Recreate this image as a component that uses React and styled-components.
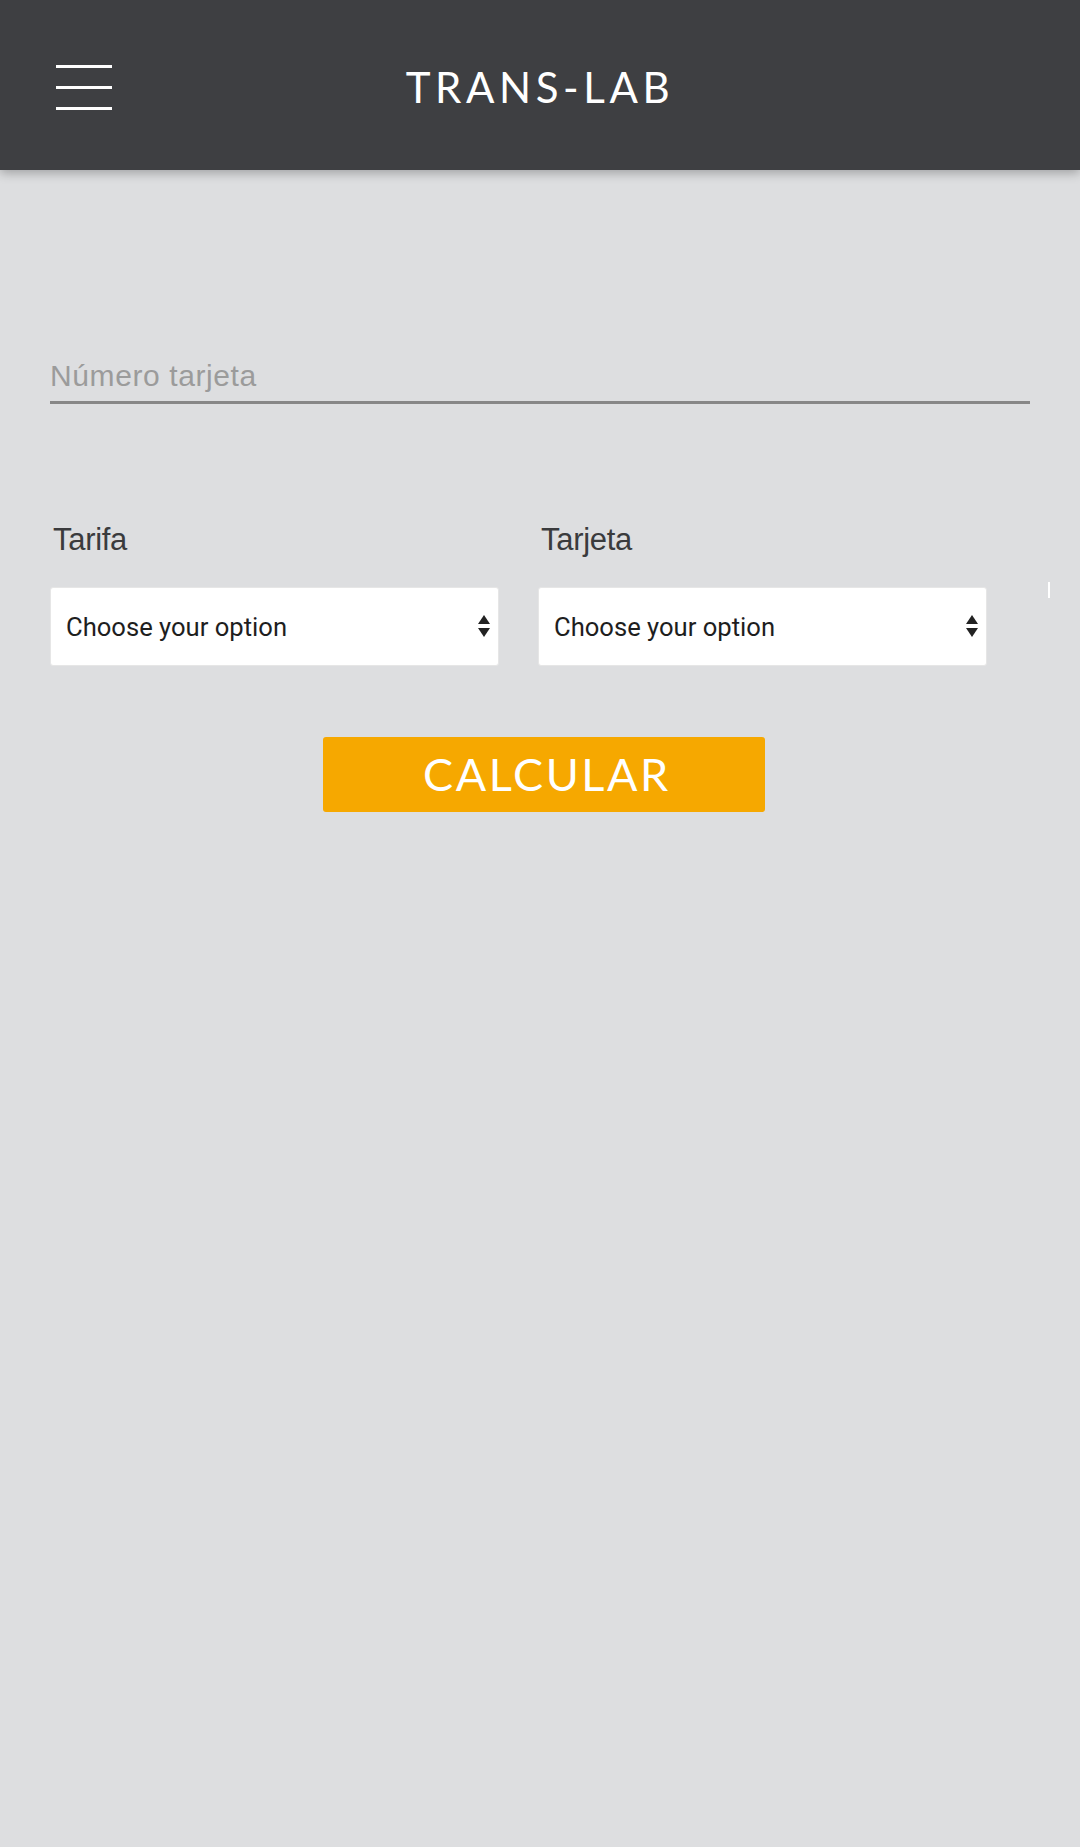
import React from "react";
import styled, { createGlobalStyle } from "styled-components";

const Global = createGlobalStyle`
  html, body { margin: 0; padding: 0; }
  body {
    background: #dddee0;
    font-family: "Liberation Sans", Arial, sans-serif;
    min-height: 1847px;
  }
  * { box-sizing: border-box; }
`;

const Page = styled.div`
  min-height: 1847px;
  background: #dddee0;
`;

const Header = styled.header`
  position: relative;
  height: 170px;
  background: #3e3f42;
  box-shadow: 0 3px 10px rgba(0, 0, 0, 0.28);
  display: flex;
  align-items: center;
  padding-left: 56px;
`;

const Burger = styled.button`
  display: flex;
  flex-direction: column;
  gap: 18px;
  width: 56px;
  padding: 0;
  margin: 4px 0 0 0;
  background: none;
  border: 0;
`;

const BurgerLine = styled.span`
  display: block;
  height: 3px;
  width: 56px;
  background: #ffffff;
`;

const Title = styled.h1`
  flex: 1;
  margin: 4px 0 0 0;
  padding-right: 112px;
  text-align: center;
  color: #ffffff;
  font-family: Lato, "Open Sans", sans-serif;
  font-weight: 400;
  font-size: 42px;
  letter-spacing: 4.6px;
  line-height: 1;
`;

const Main = styled.main`
  padding: 180px 50px 0 50px;
`;

const CardInput = styled.input`
  display: block;
  width: 980px;
  height: 54px;
  padding: 0;
  margin: 0;
  border: 0;
  border-bottom: 3px solid #878787;
  background: transparent;
  font-family: "Liberation Sans", Arial, sans-serif;
  font-size: 30px;
  letter-spacing: 0.6px;
  color: #333;
  outline: none;
  &::placeholder { color: #9b9b9b; }
`;

const Row = styled.div`
  display: flex;
  align-items: flex-start;
  gap: 39px;
  margin-top: 118px;
`;

const Field = styled.div`
  width: 449px;
  flex-shrink: 0;
  display: flex;
  flex-direction: column;
`;

const Label = styled.label`
  font-family: "Liberation Sans", Arial, sans-serif;
  font-size: 31px;
  line-height: 36px;
  color: #3a3b3d;
  padding-left: 3px;
  letter-spacing: -0.3px;
`;

const SelectBox = styled.div`
  margin-top: 29px;
  height: 79px;
  background: #ffffff;
  border: 1px solid #e6e6e6;
  border-radius: 3px;
  display: flex;
  align-items: center;
  justify-content: space-between;
  padding: 0 8px 0 15px;
  font-family: Roboto, "Noto Sans", sans-serif;
  font-size: 25.6px;
  color: #1e1e1e;
`;

const Mark = styled.span`
  display: block;
  flex-shrink: 0;
  width: 2px;
  height: 16px;
  background: #ffffff;
  margin-top: 60px;
  margin-left: 22px;
`;

const Arrows = () => (
  <svg width="12" height="23" viewBox="0 0 12 23">
    <polygon points="6,0 12,9 0,9" fill="#222" />
    <polygon points="0,13 12,13 6,22" fill="#222" />
  </svg>
);

const ButtonWrap = styled.div`
  display: flex;
  padding-left: 273px;
  margin-top: 71px;
`;

const CalcButton = styled.button`
  width: 442px;
  height: 75px;
  background: #f6a800;
  border: 0;
  border-radius: 3px;
  color: #ffffff;
  font-family: Lato, "Open Sans", sans-serif;
  font-weight: 400;
  font-size: 45px;
  letter-spacing: 2.6px;
  padding: 0 0 0 6px;
  line-height: 1;
`;

export default function App() {
  return (
    <Page>
      <Global />
      <Header>
        <Burger aria-label="menu">
          <BurgerLine />
          <BurgerLine />
          <BurgerLine />
        </Burger>
        <Title>TRANS-LAB</Title>
      </Header>
      <Main>
        <CardInput placeholder="Número tarjeta" />
        <Row>
          <Field>
            <Label>Tarifa</Label>
            <SelectBox>
              <span>Choose your option</span>
              <Arrows />
            </SelectBox>
          </Field>
          <Field>
            <Label>Tarjeta</Label>
            <SelectBox>
              <span>Choose your option</span>
              <Arrows />
            </SelectBox>
          </Field>
          <Mark />
        </Row>
        <ButtonWrap>
          <CalcButton>CALCULAR</CalcButton>
        </ButtonWrap>
      </Main>
    </Page>
  );
}
